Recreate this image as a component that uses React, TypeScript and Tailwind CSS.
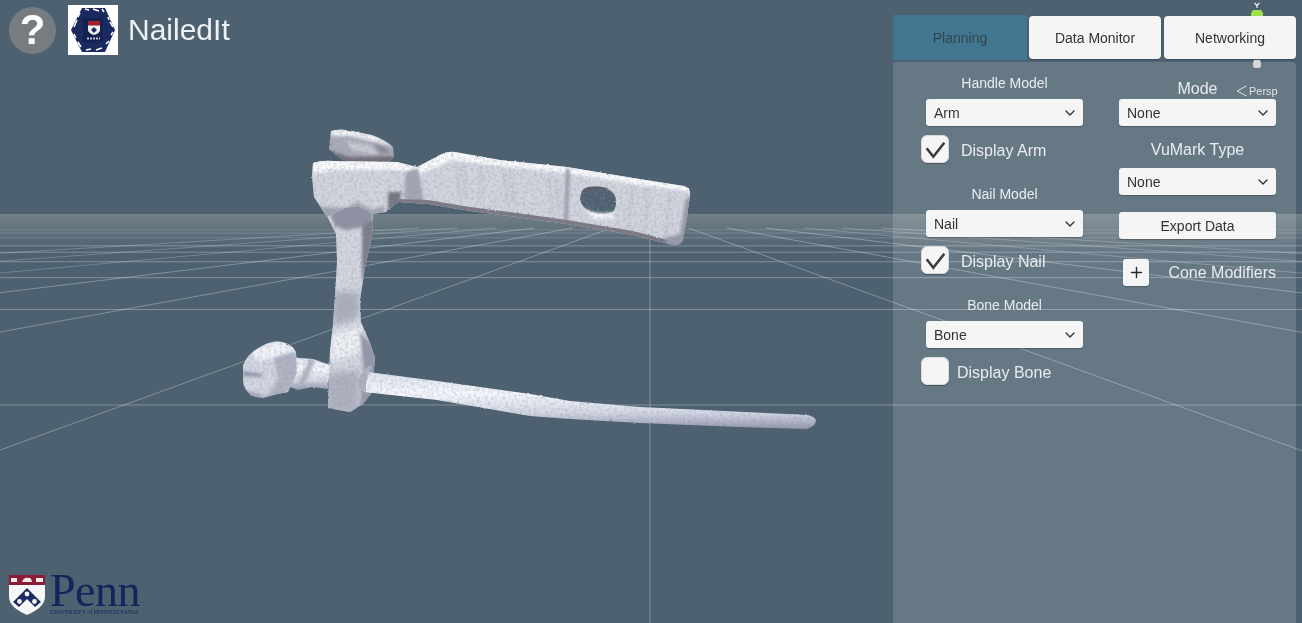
import { ChevronDown, Plus } from "lucide-react";

const SANS = "font-['Liberation_Sans',Arial,sans-serif]";

// grid floor of the 3d view, everything converges on the horizon point
const HX = 650;
const HY = 214;
const rows = [1, 2, 3, 4, 5, 6, 8, 10, 12];
const columns = [1, 2, 3, 4, 5, 6];

const ARM =
  "M313 163 Q322 160 333 161 L397 162 L417 167 L440 155 Q447 151 455 152 L500 160 L567 167 L633 178 L684 186 Q691 188 690 195 L687 217 L683 240 Q680 246 673 245 L633 235 L567 224 L517 217 L470 211 L428 204 L398 202 L386 212 L372 214 L358 206 L345 208 L327 217 L314 197 L312 177 Z";
const PILLAR =
  "M327 200 L374 200 L372 235 L365 268 L360 300 L361 322 L370 343 L375 358 L372 392 L363 404 L350 412 L328 408 L330 350 L333 325 L335 295 L337 262 L336 234 L327 216 Z";
const KNOB_TOP = "M331 131 Q340 128 352 131 L372 135 Q386 140 393 147 L394 157 L388 163 L352 163 L340 158 L329 149 Z";
const KNOB_LOW =
  "M262 346 Q272 340 282 342 Q292 344 296 352 L297 372 L288 392 Q276 394 270 396 Q258 400 250 394 Q243 388 243 380 L243 366 Q246 354 262 346 Z";
const SHAFT = "M276 356 L313 359 L330 365 L328 389 L312 387 L298 390 L276 382 Z";
const NAIL =
  "M368 372 L437 381 L530 394 L570 401 L640 407 L808 415 Q816 417 816 421 Q815 427 806 429 L740 427 L640 423 L570 419 L530 416 L437 400 L364 392 Z";

function Scene() {
  return (
    <svg className="absolute inset-0" width="1302" height="623" viewBox="0 0 1302 623">
      <defs>
        <linearGradient id="horizon" x1="0" y1="0" x2="0" y2="1">
          <stop offset="0" stopColor="#8a9499" stopOpacity="0.6" />
          <stop offset="0.5" stopColor="#8a9499" stopOpacity="0.3" />
          <stop offset="1" stopColor="#8a9499" stopOpacity="0" />
        </linearGradient>
        <linearGradient id="shaft" x1="0" y1="0" x2="0" y2="1">
          <stop offset="0" stopColor="#dde2ee" />
          <stop offset="0.38" stopColor="#f6f8fd" />
          <stop offset="0.72" stopColor="#d2d7e5" />
          <stop offset="1" stopColor="#9396a8" />
        </linearGradient>
        <filter id="soft" x="-30%" y="-30%" width="160%" height="160%">
          <feGaussianBlur stdDeviation="1.6" />
        </filter>
        <filter id="softer" x="-30%" y="-30%" width="160%" height="160%">
          <feGaussianBlur stdDeviation="3.2" />
        </filter>
        <filter id="model" x="-3%" y="-3%" width="106%" height="106%" colorInterpolationFilters="sRGB">
          <feTurbulence type="fractalNoise" baseFrequency="0.3" numOctaves="2" seed="4" result="wobble" />
          <feDisplacementMap in="SourceGraphic" in2="wobble" scale="2" xChannelSelector="R" yChannelSelector="G" result="shape" />
          <feTurbulence type="fractalNoise" baseFrequency="0.35" numOctaves="2" seed="9" result="speck" />
          <feColorMatrix
            in="speck"
            type="matrix"
            values="0 0 0 0 0.55  0 0 0 0 0.56  0 0 0 0 0.62  0 0 0 0.8 -0.33"
            result="grain"
          />
          <feComposite in="grain" in2="shape" operator="in" result="grainIn" />
          <feMerge>
            <feMergeNode in="shape" />
            <feMergeNode in="grainIn" />
          </feMerge>
        </filter>
        <clipPath id="armClip">
          <path d={ARM} />
        </clipPath>
        <clipPath id="pillarClip">
          <path d={PILLAR} />
        </clipPath>
        <clipPath id="knobTopClip">
          <path d={KNOB_TOP} />
        </clipPath>
        <clipPath id="knobLowClip">
          <path d={KNOB_LOW} />
        </clipPath>
        <clipPath id="shaftClip">
          <path d={SHAFT} />
        </clipPath>
      </defs>

      <rect x="0" y={HY} width="1302" height="36" fill="url(#horizon)" />

      <g stroke="#ffffff" strokeOpacity="0.3" strokeWidth="1" fill="none">
        {rows.map((r) => (
          <line key={r} x1="0" x2="1302" y1={HY + 191 / r} y2={HY + 191 / r} strokeOpacity={r > 6 ? 0.16 : 0.3} />
        ))}
        <line x1={HX} x2={HX} y1={HY + 14} y2="623" />
        {columns.map((c) => {
          const slope = 191 / (526 * c);
          const startX = 14 / slope;
          return (
            <g key={c}>
              <line x1={HX + startX} y1={HY + 14} x2={1302} y2={HY + 652 * slope} strokeOpacity={c > 3 ? 0.22 : 0.3} />
              <line x1={HX - startX} y1={HY + 14} x2={0} y2={HY + 650 * slope} strokeOpacity={c > 3 ? 0.22 : 0.3} />
            </g>
          );
        })}
      </g>

      <g filter="url(#model)">
        {/* top screw */}
        <path d={KNOB_TOP} fill="#a9abb8" />
        <g clipPath="url(#knobTopClip)">
          <path d="M330 129 L352 130 L374 135 L394 147 L376 142 L350 136 L330 136 Z" fill="#f4f5f8" filter="url(#soft)" />
          <path d="M346 141 L372 146 L378 155 L352 150 Z" fill="#c9cbd5" filter="url(#soft)" />
          <path d="M374 144 L386 148 L390 154 L380 152 Z" fill="#878896" filter="url(#soft)" />
          <path d="M330 151 L350 157 L394 156 L394 166 L330 166 Z" fill="#6f6c77" filter="url(#soft)" />
        </g>

        {/* pillar */}
        <path d={PILLAR} fill="#d3d6df" />
        <g clipPath="url(#pillarClip)">
          <path d="M326 204 L376 204 L370 226 L345 230 L335 226 Z" fill="#8f91a2" filter="url(#soft)" />
          <path d="M362 226 L378 216 L370 262 L362 282 Z" fill="#7d7c8a" filter="url(#soft)" />
          <path d="M333 292 L360 292 L358 318 L332 326 Z" fill="#abafbd" filter="url(#softer)" />
          <path d="M330 335 L360 326 L366 345 L362 352 L330 362 Z" fill="#eef0f5" filter="url(#softer)" />
          <path d="M360 332 L378 350 L376 396 L358 412 L364 375 Z" fill="#9598a8" filter="url(#soft)" />
          <path d="M326 374 L360 370 L358 414 L326 412 Z" fill="#aeb2c0" filter="url(#softer)" />
        </g>

        {/* arm */}
        <path d={ARM} fill="#d2d5de" />
        <g clipPath="url(#armClip)">
          <path d="M312 160 L397 160 L417 166 L445 150 L500 158 L567 165 L633 176 L692 186 L692 192 L633 184 L567 173 L500 166 L452 160 L420 174 L397 170 L333 170 L312 174 Z" fill="#fafbfd" filter="url(#soft)" />
          <path d="M406 172 L418 168 L424 202 L404 200 Z" fill="#a3a6b4" filter="url(#soft)" />
          <path d="M388 192 L402 192 L396 212 L388 212 Z" fill="#75747f" filter="url(#soft)" />
          <path d="M310 206 L345 208 L358 202 L372 210 L384 206 L384 222 L310 222 Z" fill="#a2a4ae" filter="url(#soft)" />
          <path d="M566 168 L570 169 L568 222 L564 222 Z" fill="#9b9dac" filter="url(#soft)" />
          <path d="M398 199 L428 200 L470 207 L517 213 L567 220 L633 231 L672 241 L682 238 L690 200 L694 200 L688 250 L633 240 L517 222 L428 210 L398 206 Z" fill="#7b7883" />
          <path d="M664 238 L680 234 L686 198 L692 198 L686 246 L668 246 Z" fill="#979aa8" filter="url(#soft)" />
          <g stroke="#a3a6b5" strokeWidth="1.4" strokeDasharray="2 2" fill="none" filter="url(#soft)" opacity="0.9">
            <path d="M457 166 L459 196" />
            <path d="M464 167 L465 197" />
            <path d="M480 167 L481 199" />
            <path d="M504 170 L508 205" />
            <path d="M512 172 L516 207" />
            <path d="M549 178 L553 214" />
            <path d="M556 180 L560 216" />
            <path d="M632 186 L628 230" />
            <path d="M648 190 L644 232" />
            <path d="M670 196 L665 238" />
          </g>
        </g>
        <path d="M580 199 Q581 190 585 188 Q597 184 611 191 Q617 196 616 204 Q615 211 611 213 Q597 216 586 209 Q581 205 580 199 Z" fill="#4d6170" />
        <path d="M581 192 Q597 182 612 190 Q597 186 584 193 Z" fill="#5a5861" />
        <path d="M583 208 Q597 216 613 212 L614 218 L595 220 Z" fill="#f6f7fa" filter="url(#soft)" />

        {/* lower screw */}
        <path d={SHAFT} fill="url(#shaft)" />
        <g clipPath="url(#shaftClip)">
          <path d="M310 358 L315 360 L306 382 L301 388 L299 382 Z" fill="#b1b5c3" filter="url(#soft)" />
        </g>
        <path d={KNOB_LOW} fill="#d2d6e2" />
        <g clipPath="url(#knobLowClip)">
          <path d="M250 350 L282 340 L296 350 L280 356 L258 362 Z" fill="#f0f2f8" filter="url(#soft)" />
          <path d="M274 358 L296 352 L298 378 L284 396 L264 400 L278 380 Z" fill="#afb3c2" filter="url(#soft)" />
          <path d="M243 371 L262 374 L262 377 L243 376 Z" fill="#8f92a3" filter="url(#soft)" />
          <path d="M244 390 L264 395 L262 400 L246 398 Z" fill="#a4a7b6" filter="url(#soft)" />
        </g>

        {/* nail */}
        <path d={NAIL} fill="url(#shaft)" />
        <path d="M358 388 Q358 372 370 365 L373 367 Q365 374 366 392 Z" fill="#aeb2c1" />
      </g>
    </svg>
  );
}

function HelpButton() {
  return (
    <div className={`flex h-[47px] w-[47px] items-center justify-center rounded-full bg-[#767c80] text-[42px] font-bold leading-none text-white ${SANS}`}>
      ?
    </div>
  );
}

function NailedItLogo() {
  return (
    <div className="h-[50px] w-[50px] bg-white">
      <svg width="50" height="50" viewBox="0 0 50 50">
        <path d="M14 3 L37 3 L47 25 L37 47 L14 47 L3 25 Z" fill="#1a2a5e" />
        <path d="M17 4 L21 5 M25 4 L31 6 M34 4 L36 7 M6 22 L9 15 M10 12 L12 8 M42 17 L45 22 M40 12 L41 15 M6 29 L8 33 M10 37 L13 42 M18 45 L23 44 M28 45 L34 43 M38 39 L41 36 M43 30 L45 27" stroke="#ffffff" strokeWidth="1.5" fill="none" />
        <rect x="15" y="13" width="20" height="24" fill="#132250" />
        <rect x="20" y="16" width="12" height="4.5" fill="#a81e2e" />
        <path d="M20 20.5 H32 V25 Q32 28 26 30 Q20 28 20 25 Z" fill="#f2f2f2" />
        <path d="M26 22 L29 25 L26 28 L23 25 Z" fill="#1a2a5e" />
        <path d="M19 33.5 H32" stroke="#b9c0d2" strokeWidth="2" strokeDasharray="2 1" />
      </svg>
    </div>
  );
}

function PennLogo() {
  return (
    <div className="flex items-start gap-[5px] pb-[7px] pl-[9px]">
      <svg className="mt-[3px]" width="36" height="40" viewBox="0 0 36 40">
        <path d="M0 0 H36 V22 Q36 32 18 40 Q0 32 0 22 Z" fill="#f6f6f6" />
        <rect width="36" height="10" fill="#8c1c33" />
        <path d="M2 3 H8 V7 H2 Z M13 7 Q15 2 19 3 Q22 2 23 7 Z M27 3 H34 V7 H27 Z" fill="#f3e9ea" />
        <path d="M18 13 L32 27 L26 32 L18 24 L10 32 L4 27 Z" fill="#1c2c63" />
        <circle cx="18" cy="19" r="2.4" fill="#f6f6f6" />
        <circle cx="10.5" cy="26.5" r="2.4" fill="#f6f6f6" />
        <circle cx="25.5" cy="26.5" r="2.4" fill="#f6f6f6" />
      </svg>
      <div className="flex flex-col text-[#15245a]">
        <span className="font-['Liberation_Serif',serif] text-[46px] leading-[37px] tracking-[-0.5px]">Penn</span>
        <span className="whitespace-nowrap font-['Liberation_Serif',serif] text-[6px] leading-[7px]">
          UNIVERSITY of PENNSYLVANIA
        </span>
      </div>
    </div>
  );
}

function Dropdown({ value }: { value: string }) {
  return (
    <div className={`flex h-[27px] w-[157px] items-center justify-between rounded-[3px] bg-[#f5f5f5] pl-2 pr-[5px] text-sm text-[#323232] shadow-[0_1px_1px_rgba(40,50,60,0.45)] ${SANS}`}>
      {value}
      <ChevronDown size={16} strokeWidth={2} className="text-[#323232]" />
    </div>
  );
}

function Checkbox({ checked }: { checked: boolean }) {
  return (
    <div className="h-[28px] w-[28px] shrink-0 rounded-[6px] border border-[#d8dadc] bg-[#f5f5f5] shadow-[0_1px_1px_rgba(40,50,60,0.5)]">
      {checked && (
        <svg width="26" height="26" viewBox="0 0 26 26">
          <path d="M4.7 12.3 L11.3 20.7 L22.3 6.7" fill="none" stroke="#3c3c3c" strokeWidth="2.6" />
        </svg>
      )}
    </div>
  );
}

function ModelSection({ title, value, check, checked, gap }: { title: string; value: string; check: string; checked: boolean; gap: string }) {
  return (
    <div className="flex h-[111px] flex-col">
      <div className="h-[20px] w-[157px] pt-[1px] text-center text-sm leading-[20px] text-[#e8ecef]">{title}</div>
      <div className="mt-[7px]">
        <Dropdown value={value} />
      </div>
      <div className={`ml-[-5px] mt-[9px] flex items-center ${gap}`}>
        <Checkbox checked={checked} />
        <span className="pt-[3px] text-base text-[#e8ecef]">{check}</span>
      </div>
    </div>
  );
}

function Tab({ label, active }: { label: string; active?: boolean }) {
  if (active) {
    return (
      <div className="flex h-[45px] w-[134px] items-center justify-center bg-[#40768f] text-sm text-[#32454f]">{label}</div>
    );
  }
  return (
    <div className="flex h-[43px] w-[132px] items-center justify-center rounded-[4px] bg-[#f5f5f5] text-sm text-[#323232] shadow-[0_1px_1px_rgba(40,50,60,0.45)]">
      {label}
    </div>
  );
}

function SidePanel() {
  return (
    <div className={`relative flex h-full w-[403px] flex-col ${SANS}`}>
      <div className="flex items-center">
        <Tab label="Planning" active />
        <div className="ml-[2px]">
          <Tab label="Data Monitor" />
        </div>
        <div className="ml-[3px]">
          <Tab label="Networking" />
        </div>
      </div>

      <div className="mt-[2px] flex flex-1 gap-[36px] rounded-t-[4px] bg-white/[0.15] pl-[33px] pt-[10px]">
        <div className="flex flex-col">
          <ModelSection title="Handle Model" value="Arm" check="Display Arm" checked gap="gap-[12px]" />
          <ModelSection title="Nail Model" value="Nail" check="Display Nail" checked gap="gap-[12px]" />
          <ModelSection title="Bone Model" value="Bone" check="Display Bone" checked={false} gap="gap-[8px]" />
        </div>

        <div className="flex w-[157px] flex-col">
          <div className="mt-[7px] h-[20px] text-center text-base leading-[20px] text-[#e8ecef]">Mode</div>
          <div>
            <Dropdown value="None" />
          </div>
          <div className="mt-[14px] h-[20px] text-center text-base leading-[20px] text-[#e8ecef]">VuMark Type</div>
          <div className="mt-[8px]">
            <Dropdown value="None" />
          </div>
          <div className="mt-[17px] flex h-[27px] items-center justify-center rounded-[3px] bg-[#f5f5f5] text-sm text-[#323232] shadow-[0_1px_1px_rgba(40,50,60,0.45)]">
            Export Data
          </div>
          <div className="ml-[4px] mt-[20px] flex items-center gap-[19px]">
            <div className="flex h-[27px] w-[27px] items-center justify-center rounded-[3px] bg-[#f5f5f5] shadow-[0_1px_1px_rgba(40,50,60,0.45)]">
              <Plus size={17} strokeWidth={2} className="text-[#2a2a2a]" />
            </div>
            <span className="whitespace-nowrap pt-[1px] text-base text-[#e8ecef]">Cone Modifiers</span>
          </div>
        </div>
      </div>

      {/* scene gizmo, sticks out around the tabs */}
      <svg className="absolute left-[355px] top-[-15px]" width="18" height="17" viewBox="0 0 18 17">
        <path d="M6.5 3 L9 5.5 L11.5 3 M9 5.5 V8" fill="none" stroke="#f4f4f4" strokeWidth="1.2" />
        <path d="M5 10 H13 L15 13 V16 H3 V13 Z" fill="#9ee04a" />
      </svg>
      <svg className="absolute left-[359px] top-[45px]" width="10" height="9" viewBox="0 0 10 9">
        <path d="M2 0 H8 L9 3 V6 Q9 8 5 8 Q1 8 1 6 V3 Z" fill="#d4d6d8" />
      </svg>
      <div className="absolute left-[343px] top-[69px] flex items-center gap-[2px] text-[11px] leading-[14px] text-[#dfe3e6]">
        <svg width="11" height="12" viewBox="0 0 11 12">
          <path d="M10.5 1 L1 6 L10.5 11" fill="none" stroke="#dfe3e6" strokeWidth="1" />
        </svg>
        Persp
      </div>
    </div>
  );
}

export default function App() {
  return (
    <div className="relative flex h-[623px] w-[1302px] overflow-hidden bg-[#4d6170]">
      <Scene />
      <div className="relative flex flex-1 flex-col justify-between">
        <div className="flex items-center pl-[9px] pt-[5px]">
          <HelpButton />
          <div className="ml-[12px]">
            <NailedItLogo />
          </div>
          <span className={`ml-[10px] pb-[2px] text-[30px] text-[#eef1f3] ${SANS}`}>NailedIt</span>
        </div>
        <PennLogo />
      </div>
      <div className="relative mr-[6px] h-full pt-[15px]">
        <SidePanel />
      </div>
    </div>
  );
}
